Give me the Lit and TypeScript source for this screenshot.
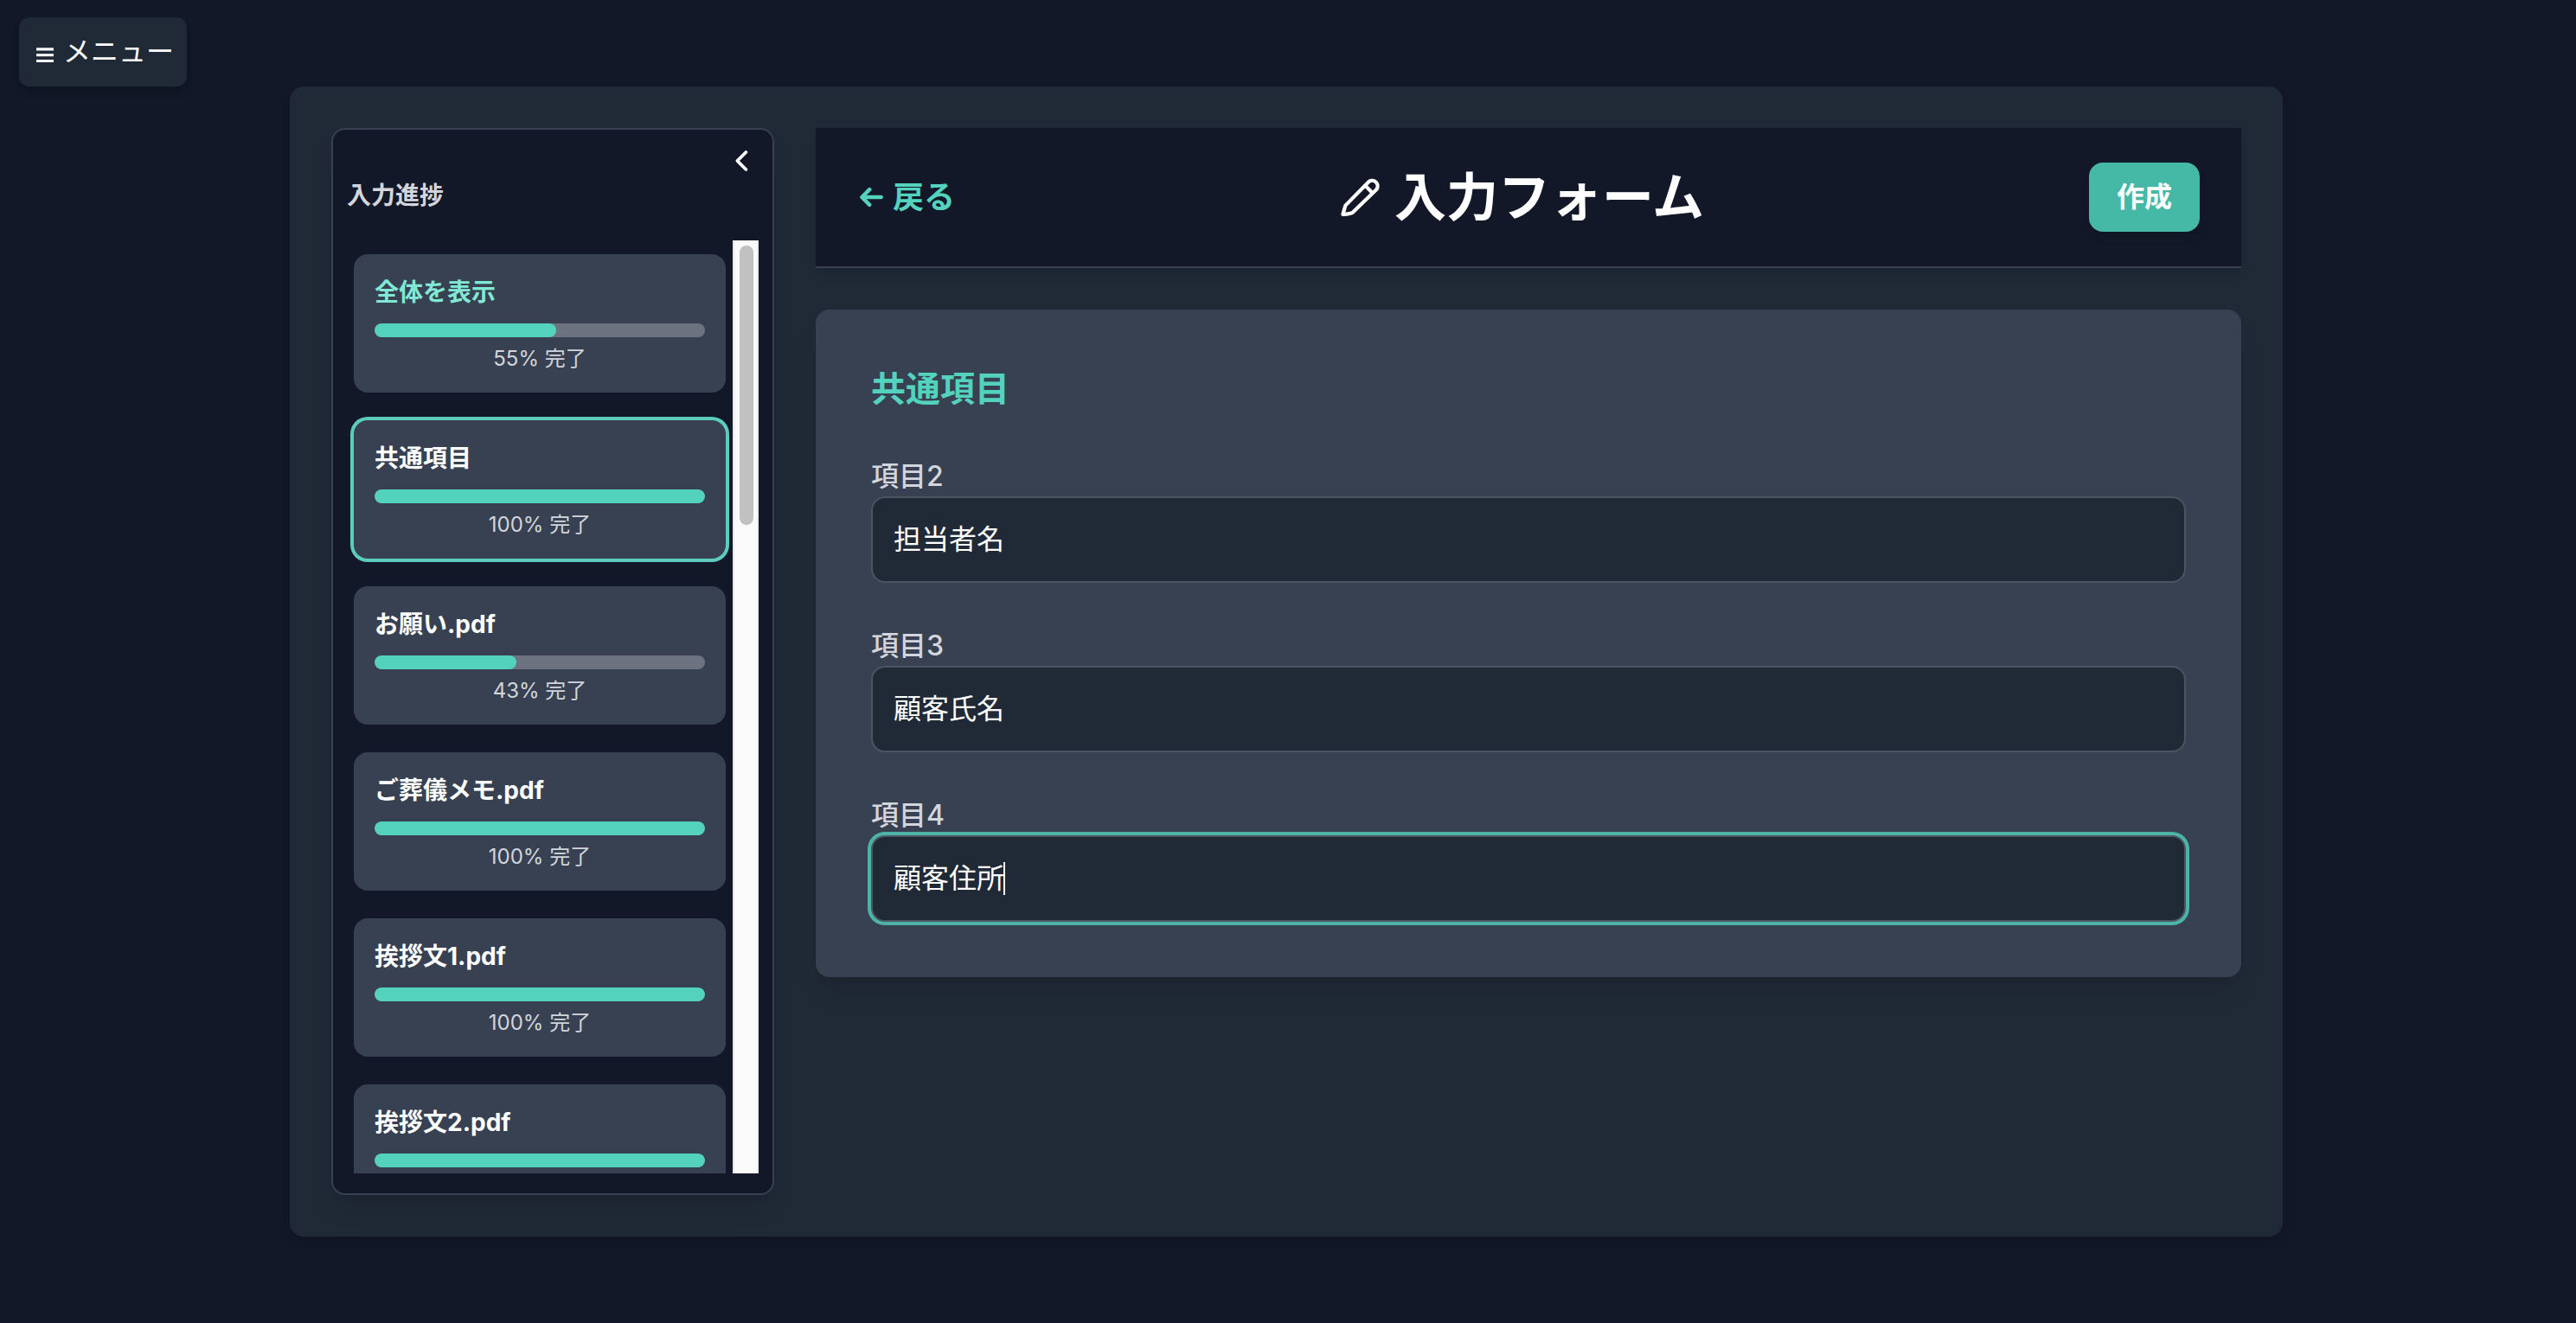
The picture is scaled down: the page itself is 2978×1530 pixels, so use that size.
import { LitElement, html, css, svg } from 'lit';
import { customElement, property } from 'lit/decorators.js';
import { classMap } from 'lit/directives/class-map.js';
import { styleMap } from 'lit/directives/style-map.js';

interface Section {
  name: string;
  percent: number;
  overall?: boolean;
}

interface Field {
  label: string;
  value: string;
}

const SECTIONS: Section[] = [
  { name: '全体を表示', percent: 55, overall: true },
  { name: '共通項目', percent: 100 },
  { name: 'お願い.pdf', percent: 43 },
  { name: 'ご葬儀メモ.pdf', percent: 100 },
  { name: '挨拶文1.pdf', percent: 100 },
  { name: '挨拶文2.pdf', percent: 100 },
];

const FIELDS: Field[] = [
  { label: '項目2', value: '担当者名' },
  { label: '項目3', value: '顧客氏名' },
  { label: '項目4', value: '顧客住所' },
];

const menuIcon = svg`
  <svg class="menu-icon" width="26" height="24" viewBox="0 0 26 24" fill="currentColor">
    <rect x="4" y="3.3" width="20" height="3.2" />
    <rect x="4" y="10.2" width="20" height="3" />
    <rect x="4" y="17" width="20" height="3" />
  </svg>`;

const chevronIcon = svg`
  <svg width="32" height="32" viewBox="0 0 32 32" fill="none" stroke="currentColor"
    stroke-width="3.8" stroke-linecap="round" stroke-linejoin="round">
    <path d="M21.4 6 L11.4 16 L21.4 26" />
  </svg>`;

const arrowIcon = svg`
  <svg width="28" height="24" viewBox="0 0 28 24" fill="none" stroke="currentColor"
    stroke-width="4.5" stroke-linecap="round" stroke-linejoin="round">
    <path d="M12.2 3.2 L3.4 12 L12.2 20.8 M4 12 H25.7" />
  </svg>`;

const pencilIcon = svg`
  <svg width="46" height="46" viewBox="0 0 46 46" fill="none" stroke="currentColor"
    stroke-width="4.2" stroke-linecap="round" stroke-linejoin="round">
    <path d="M3.4 42.8 L6.4 32.6 L33.6 5 A6.4 6.4 0 0 1 42.4 14 L15 40.6 Q13 42.4 3.4 42.8 Z" />
    <path d="M29.4 9.6 L37.4 18" />
  </svg>`;

/** One entry of the progress list: title, bar and percentage. */
@customElement('progress-card')
export class ProgressCard extends LitElement {
  @property() name = '';
  @property({ type: Number }) percent = 0;
  @property({ type: Boolean }) overall = false;
  @property({ type: Boolean, reflect: true }) active = false;

  static styles = css`
    :host {
      display: block;
      flex: none;
      box-sizing: border-box;
      height: 160px;
      padding: 24px;
      border-radius: 16px;
      background: #384151;
    }

    :host([active]) {
      box-shadow: 0 0 0 4px #5ccdbd;
    }

    .name {
      margin-bottom: 16px;
      font-size: 28px;
      font-weight: 700;
      line-height: 40px;
      color: #fff;
    }

    .name.overall {
      color: #80e8d4;
    }

    .track {
      height: 16px;
      border-radius: 8px;
      background: #6c7280;
      overflow: hidden;
    }

    .bar {
      height: 100%;
      border-radius: 8px;
      background: #53d2be;
    }

    .done {
      margin-top: 9px;
      font-size: 24px;
      line-height: 32px;
      text-align: center;
      color: #d2d5db;
    }
  `;

  render() {
    return html`
      <div class=${classMap({ name: true, overall: this.overall })}>${this.name}</div>
      <div class="track">
        <div class="bar" style=${styleMap({ width: `${this.percent}%` })}></div>
      </div>
      <div class="done">${this.percent}% 完了</div>
    `;
  }
}

@customElement('app-root')
export class AppRoot extends LitElement {
  @property() current = '共通項目';
  @property() focused = '項目4';

  static styles = css`
    :host {
      display: block;
      position: relative;
      box-sizing: border-box;
      width: 100%;
      height: 100vh;
      padding: 100px 339px 0 335px;
      overflow: hidden;
      background: #121827;
      color: #fff;
      font-family: Inter, 'Noto Sans CJK JP', sans-serif;
    }

    /* floats over the page corner */
    .menu {
      position: absolute;
      top: 20px;
      left: 22px;
      display: flex;
      align-items: center;
      gap: 9px;
      box-sizing: border-box;
      width: 194px;
      height: 80px;
      padding: 0 16px;
      border-radius: 12px;
      background: #202a37;
      box-shadow: 0 8px 12px -2px rgb(0 0 0 / 0.1), 0 4px 8px -4px rgb(0 0 0 / 0.1);
      font-size: 32px;
      line-height: 48px;
      white-space: nowrap;
    }

    .menu-icon {
      flex: none;
      margin-top: 8px;
    }

    .panel {
      display: flex;
      gap: 48px;
      box-sizing: border-box;
      width: 2304px;
      height: 1330px;
      padding: 48px;
      border-radius: 16px;
      background: #202a37;
      box-shadow: 0 8px 12px -2px rgb(0 0 0 / 0.1);
    }

    /* ── sidebar ── */
    .sidebar {
      display: flex;
      flex-direction: column;
      flex: none;
      box-sizing: border-box;
      width: 512px;
      height: 1234px;
      padding: 20px 16px 23px;
      border: 2px solid #384151;
      border-radius: 16px;
      background: #121827;
      box-shadow: 0 20px 30px -6px rgb(0 0 0 / 0.12), 0 8px 12px -8px rgb(0 0 0 / 0.1);
    }

    .collapse {
      display: flex;
      justify-content: flex-end;
      height: 32px;
      padding-right: 4px;
    }

    .side-title {
      height: 72px;
      margin: 0;
      padding-top: 4px;
      font-size: 28px;
      font-weight: 700;
      line-height: 40px;
      color: #d2d5db;
    }

    .scroller {
      display: flex;
      flex: 1;
      min-height: 0;
      overflow: hidden;
    }

    .list {
      display: flex;
      flex-direction: column;
      gap: 32px;
      flex: 1;
      padding: 16px 8px;
    }

    .scrollbar {
      flex: none;
      box-sizing: border-box;
      width: 30px;
      padding: 6px;
      border: 2px solid #e9e9ec;
      border-width: 0 2px;
      background: #fafafa;
    }

    .thumb {
      width: 16px;
      height: 323px;
      border-radius: 8px;
      background: #c1c1c1;
    }

    /* ── main column ── */
    .main {
      flex: 1;
      min-width: 0;
    }

    .header {
      display: flex;
      align-items: center;
      justify-content: space-between;
      box-sizing: border-box;
      height: 162px;
      padding: 0 48px;
      border-bottom: 2px solid #384151;
      background: #121827;
      box-shadow: 0 8px 12px -2px rgb(0 0 0 / 0.1), 0 4px 8px -4px rgb(0 0 0 / 0.1);
    }

    .back {
      display: flex;
      align-items: center;
      gap: 11px;
      padding-left: 2px;
      font-size: 36px;
      font-weight: 700;
      line-height: 56px;
      color: #53d2be;
    }

    .title {
      display: flex;
      align-items: center;
      gap: 17px;
      margin: 0;
      font-size: 60px;
      font-weight: 700;
      line-height: 72px;
    }

    .create {
      width: 128px;
      height: 80px;
      border-radius: 16px;
      background: #46b8a6;
      box-shadow: 0 8px 12px -2px rgb(0 0 0 / 0.1);
      font-size: 32px;
      font-weight: 700;
      line-height: 80px;
      text-align: center;
    }

    .form {
      display: flex;
      flex-direction: column;
      gap: 48px;
      box-sizing: border-box;
      margin-top: 48px;
      padding: 64px;
      border-radius: 16px;
      background: #384151;
      box-shadow: 0 20px 30px -6px rgb(0 0 0 / 0.12), 0 8px 12px -8px rgb(0 0 0 / 0.1);
    }

    .form-title {
      margin: 0;
      font-size: 40px;
      font-weight: 700;
      line-height: 56px;
      color: #53d2be;
    }

    .label {
      box-sizing: border-box;
      height: 48px;
      padding-top: 1px;
      font-size: 32px;
      font-weight: 500;
      line-height: 48px;
      color: #d2d5db;
    }

    .input {
      display: flex;
      align-items: center;
      box-sizing: border-box;
      height: 100px;
      padding: 0 24px;
      border: 2px solid #4c5462;
      border-radius: 16px;
      background: #202a37;
      font-size: 32px;
      line-height: 48px;
    }

    .input.focused {
      box-shadow: 0 0 0 4px #4cb3a6;
    }

    .caret {
      width: 2px;
      height: 38px;
      margin-left: -1px;
      background: #fff;
    }
  `;

  private renderField(field: Field) {
    const focused = field.label === this.focused;
    return html`
      <div>
        <div class="label">${field.label}</div>
        <div class=${classMap({ input: true, focused })}>
          <span>${field.value}</span>${focused ? html`<span class="caret"></span>` : ''}
        </div>
      </div>
    `;
  }

  render() {
    return html`
      <div class="menu">${menuIcon}<span>メニュー</span></div>

      <div class="panel">
        <aside class="sidebar">
          <div class="collapse">${chevronIcon}</div>
          <h2 class="side-title">入力進捗</h2>
          <div class="scroller">
            <div class="list">
              ${SECTIONS.map(
                (s) => html`
                  <progress-card
                    .name=${s.name}
                    .percent=${s.percent}
                    .overall=${!!s.overall}
                    ?active=${s.name === this.current}
                  ></progress-card>
                `
              )}
            </div>
            <div class="scrollbar"><div class="thumb"></div></div>
          </div>
        </aside>

        <main class="main">
          <header class="header">
            <div class="back">${arrowIcon}<span>戻る</span></div>
            <h1 class="title">${pencilIcon}<span>入力フォーム</span></h1>
            <div class="create">作成</div>
          </header>

          <section class="form">
            <h2 class="form-title">共通項目</h2>
            ${FIELDS.map((f) => this.renderField(f))}
          </section>
        </main>
      </div>
    `;
  }
}
